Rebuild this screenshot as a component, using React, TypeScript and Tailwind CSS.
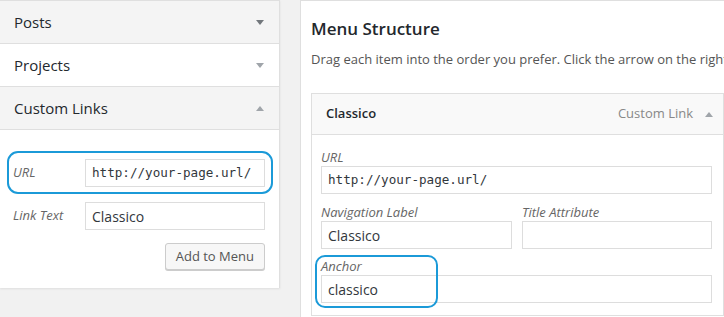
import React from 'react';

function Caret({ up = false, color }: { up?: boolean; color: string }) {
  return (
    <svg width="8" height="5" viewBox="0 0 8 5" className="shrink-0">
      {up ? <path d="M0 5 L4 0 L8 5 Z" fill={color} /> : <path d="M0 0 L8 0 L4 5 Z" fill={color} />}
    </svg>
  );
}

function Section({ title, shade, up, caret }: { title: string; shade: boolean; up?: boolean; caret: string }) {
  return (
    <div
      className={`flex h-[43px] items-center justify-between border-b border-[#dfdfdf] pl-[14px] pr-[15px] ${
        shade ? 'bg-[#f4f4f4]' : 'bg-white'
      }`}
    >
      <span className="text-[15px] text-[#23282d]">{title}</span>
      <Caret up={up} color={caret} />
    </div>
  );
}

const input =
  'h-[28px] border border-[#dddddd] bg-white px-[6px] text-[#32373c] flex items-center whitespace-nowrap overflow-hidden';
const sans = 'text-[14px]';
const mono = "font-['DejaVu_Sans_Mono',monospace] text-[12.6px]";

export default function App() {
  return (
    <div className="flex h-[317px] w-[724px] overflow-hidden bg-[#f1f1f1] font-['Open_Sans',sans-serif]">
      {/* left column */}
      <div className="w-[280px] shrink-0">
        <div className="border-t border-r border-[#dfdfdf] bg-white pb-[18px] shadow-[0_1px_2px_rgba(0,0,0,0.08)]">
          <Section title="Posts" shade caret="#72777c" />
          <Section title="Projects" shade={false} caret="#a0a5aa" />
          <Section title="Custom Links" shade up caret="#a0a5aa" />

          <div className="pt-[29px] pr-[14px]">
            <div className="relative flex items-center">
              <span className="w-[85px] pl-[13px] text-[13px] italic text-[#666]">URL</span>
              <div className={`${input} w-[180px] ${mono}`}>http://your-page.url/</div>
              <div className="pointer-events-none absolute -top-[8px] left-[7px] h-[43px] w-[266px] rounded-[11px] border-2 border-[#1b9ad8]" />
            </div>

            <div className="mt-[15px] flex items-center">
              <span className="w-[85px] pl-[13px] text-[13px] italic text-[#666]">Link Text</span>
              <div className={`${input} w-[180px] ${sans}`}>Classico</div>
            </div>

            <div className="mt-[13px] flex justify-end">
              <button className="h-[27px] rounded-[3px] border border-[#cccccc] bg-[#f7f7f7] px-[10px] text-[13px] text-[#555] shadow-[0_1px_0_#cccccc]">
                Add to Menu
              </button>
            </div>
          </div>
        </div>
      </div>

      {/* right column */}
      <div className="ml-[20px] flex-1 border-t border-l border-[#dfdfdf] bg-white pl-[10px]">
        <h3 className="mt-[15px] text-[17px] font-semibold leading-[26px] text-[#23282d]">Menu Structure</h3>
        <p className="mt-[8px] whitespace-nowrap text-[13px] leading-[18px] text-[#555]">
          Drag each item into the order you prefer. Click the arrow on the right of the item to reveal additional configuration options.
        </p>

        <div className="mt-[25px] w-[413px] border border-[#dfdfdf]">
          <div className="flex h-[41px] items-center justify-between border-b border-[#dfdfdf] bg-[#f9f9f9] pl-[14px] pr-[10px]">
            <span className="text-[13px] font-semibold text-[#23282d]">Classico</span>
            <div className="flex items-center gap-[12px]">
              <span className="text-[13px] text-[#888]">Custom Link</span>
              <Caret up color="#a0a5aa" />
            </div>
          </div>

          <div className="px-[9px] pt-[13px] pb-[12px]">
            <div className="text-[13px] italic leading-[18px] text-[#666]">URL</div>
            <div className={`${input} w-[391px] ${mono}`}>http://your-page.url/</div>

            <div className="mt-[9px] flex gap-[10px]">
              <div className="w-[191px]">
                <div className="text-[13px] italic leading-[18px] text-[#666]">Navigation Label</div>
                <div className={`${input} w-full ${sans}`}>Classico</div>
              </div>
              <div className="w-[190px]">
                <div className="text-[13px] italic leading-[18px] text-[#666]">Title Attribute</div>
                <div className={`${input} w-full`} />
              </div>
            </div>

            <div className="relative mt-[8px]">
              <div className="text-[13px] italic leading-[18px] text-[#666]">Anchor</div>
              <div className={`${input} w-[391px] ${sans}`}>classico</div>
              <div className="pointer-events-none absolute -top-[2px] -left-[6px] h-[53px] w-[123px] rounded-[10px] border-2 border-[#1b9ad8]" />
            </div>
          </div>
        </div>
      </div>
    </div>
  );
}
